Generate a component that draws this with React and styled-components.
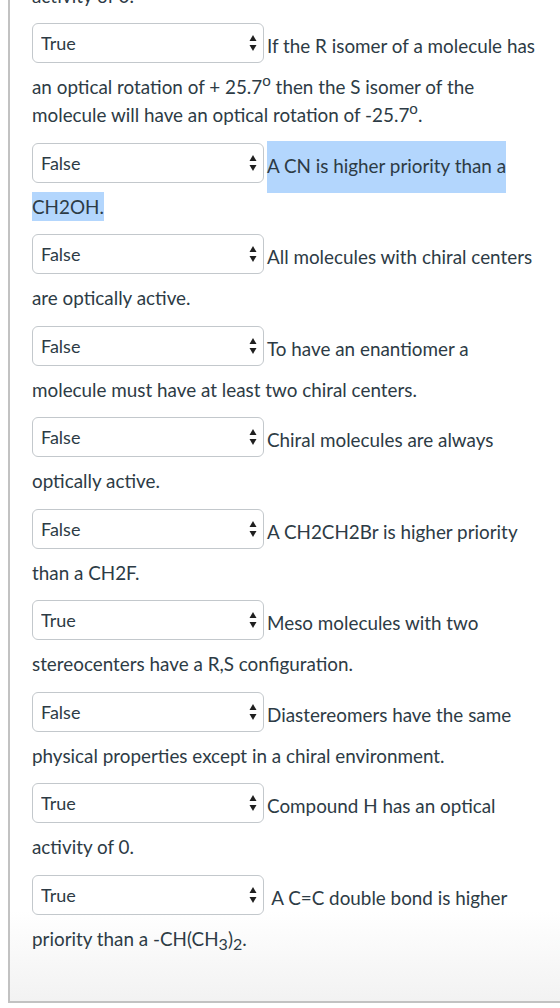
import React from "react";
import styled, { createGlobalStyle } from "styled-components";

const GlobalStyle = createGlobalStyle`
  body {
    margin: 0;
    background: #ffffff;
    overflow: hidden;
    font-family: Lato, "Liberation Sans", sans-serif;
  }
`;

const Panel = styled.div`
  box-sizing: border-box;
  width: 558px;
  margin: -18.5px 0 0 8px;
  padding: 0 22px 35px;
  border-left: 2px solid #c2c2c2;
  border-bottom: 2px solid #c2c2c2;
  background: linear-gradient(
    to bottom,
    #ffffff calc(100% - 90px),
    #f2f2f2 100%
  );
`;

const Question = styled.p`
  margin: 0 0 13.5px;
  font-size: 18.85px;
  line-height: 28px;
  color: #2d3b45;
`;

const SelectWrap = styled.span`
  position: relative;
  display: inline-block;
  vertical-align: 3px;
  margin: 0 3px 10px 0;
`;

const Select = styled.select`
  appearance: none;
  box-sizing: border-box;
  width: 232px;
  height: 40px;
  margin: 0;
  padding: 0 24px 0 8px;
  border: 1px solid #c3c8cc;
  border-radius: 6px;
  background: #ffffff;
  font-family: Lato, "Liberation Sans", sans-serif;
  font-size: 18px;
  color: #2d3b45;
  outline: none;
`;

const ArrowBox = styled.span`
  position: absolute;
  right: 7px;
  top: 50%;
  transform: translateY(-50%);
  display: flex;
  pointer-events: none;
`;

const Marked = styled.span`
  background: #b3d6fd;
  padding: ${(p) => p.$top}px 0 ${(p) => p.$bottom}px;
`;

const Sup = styled.sup`
  font-size: 0.8em;
  line-height: 0;
  vertical-align: 0.55em;
`;

const Sub = styled.sub`
  font-size: 0.85em;
  line-height: 0;
  vertical-align: -0.25em;
`;

const questions = [
  {
    answer: "True",
    text: (
      <>
        If the R isomer of a molecule has an optical rotation of + 25.7
        <Sup>o</Sup> then the S isomer of the molecule will have an optical
        rotation of -25.7<Sup>o</Sup>.
      </>
    ),
  },
  {
    answer: "False",
    text: (
      <>
        <Marked $top={13} $bottom={16}>
          A CN is higher priority than a{" "}
        </Marked>
        <Marked $top={3} $bottom={3}>
          CH2OH.
        </Marked>
      </>
    ),
  },
  { answer: "False", text: "All molecules with chiral centers are optically active." },
  {
    answer: "False",
    text: "To have an enantiomer a molecule must have at least two chiral centers.",
  },
  { answer: "False", text: "Chiral molecules are always optically active." },
  { answer: "False", text: "A CH2CH2Br is higher priority than a CH2F." },
  {
    answer: "True",
    text: "Meso molecules with two stereocenters have a R,S configuration.",
  },
  {
    answer: "False",
    text: "Diastereomers have the same physical properties except in a chiral environment.",
  },
  { answer: "True", text: "Compound H has an optical activity of 0." },
  {
    answer: "True",
    text: (
      <>
        {"\u00a0"}A C=C double bond is higher priority than a -CH(CH
        <Sub>3</Sub>)<Sub>2</Sub>.
      </>
    ),
  },
];

const Arrows = () => (
  <svg width="8" height="18" viewBox="0 0 8 18">
    <path d="M4 1 L7.5 7 L0.5 7 Z" fill="#1f1f1f" />
    <path d="M0.5 11 L7.5 11 L4 17 Z" fill="#1f1f1f" />
  </svg>
);

const AnswerSelect = ({ value }) => (
  <SelectWrap>
    <Select defaultValue={value}>
      <option>[ Choose ]</option>
      <option>True</option>
      <option>False</option>
    </Select>
    <ArrowBox>
      <Arrows />
    </ArrowBox>
  </SelectWrap>
);

const App = () => {
  return (
    <>
      <GlobalStyle />
      <Panel>
        <Question>activity of 0.</Question>
        {questions.map((q, i) => (
          <Question key={i}>
            <AnswerSelect value={q.answer} />
            {q.text}
          </Question>
        ))}
      </Panel>
    </>
  );
};

export default App;
